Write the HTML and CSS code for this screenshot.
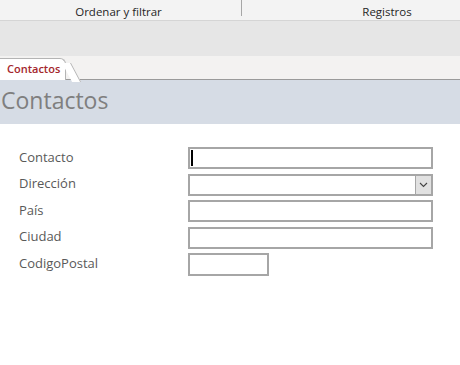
FILE: index.html
```html
<!DOCTYPE html>
<html lang="es">
<head>
  <meta charset="UTF-8" />
  <title>Contactos</title>
  <link rel="stylesheet" href="styles.css">
</head>
<body>
  <!-- Ribbon group captions -->
  <div class="ribbon">
    <div class="group group-sort">Ordenar y filtrar</div>
    <div class="group group-records">Registros</div>
  </div>
  <div class="ribbon-blank"></div>

  <!-- Document tabs -->
  <div class="tabs">
    <div class="tab">Contactos</div>
  </div>

  <div class="form-header">Contactos</div>

  <div class="form-body">
    <div class="row">
      <label class="label">Contacto</label>
      <div class="field field-wide"><span class="caret"></span></div>
    </div>
    <div class="row">
      <label class="label">Dirección</label>
      <div class="field field-wide combo">
        <span class="combo-btn">
          <svg width="9" height="6" viewBox="0 0 9 6"><path d="M1 1 L4.5 4.5 L8 1" fill="none" stroke="#444" stroke-width="1.1"/></svg>
        </span>
      </div>
    </div>
    <div class="row">
      <label class="label">País</label>
      <div class="field field-wide"></div>
    </div>
    <div class="row">
      <label class="label">Ciudad</label>
      <div class="field field-wide"></div>
    </div>
    <div class="row">
      <label class="label">CodigoPostal</label>
      <div class="field field-short"></div>
    </div>
  </div>
</body>
</html>
```

FILE: styles.css
```css
* {
  margin: 0;
  padding: 0;
  box-sizing: border-box;
}

body {
  font-family: "Open Sans", "Noto Sans", sans-serif;
  background: #fff;
  width: 460px;
  height: 365px;
  overflow: hidden;
}

/* Ribbon captions */
.ribbon {
  display: flex;
  height: 21px;
  background: #f3f3f3;
  border-bottom: 1px solid #d5d5d5;
  font-size: 11.5px;
  color: #262626;
}

.group {
  text-align: center;
}

.group-sort {
  width: 242px;
  border-right: 1px solid #a6a6a6;
  height: 16px;
  line-height: 24px;
  padding-right: 4px;
}

.group-records {
  flex: 1;
  line-height: 24px;
  padding-left: 72px;
}

.ribbon-blank {
  height: 35px;
  background: #e6e6e6;
}

/* Tabs */
.tabs {
  height: 24px;
  background: #f3f2f1;
  border-bottom: 1px solid #9a9a9a;
  position: relative;
}

.tab {
  position: absolute;
  left: 0;
  top: 2px;
  height: 22px;
  width: 66px;
  background: #fff;
  border: 1px solid #b4b4b4;
  border-left: none;
  border-bottom: none;
  border-top-right-radius: 6px;
  color: #a4262c;
  font-size: 11px;
  font-weight: 600;
  padding-left: 7px;
  line-height: 20px;
}

.tab::after {
  content: "";
  position: absolute;
  right: -6px;
  top: 4px;
  width: 8px;
  height: 19px;
  background: #fff;
  border-right: 1px solid #b4b4b4;
  transform: skewX(28deg);
  transform-origin: top left;
}

/* Form header */
.form-header {
  height: 44px;
  background: #d6dce5;
  color: #7f7f7f;
  font-size: 23px;
  padding-left: 1px;
  line-height: 41px;
}

/* Form body */
.form-body {
  padding: 23px 0 0 19px;
}

.row {
  display: flex;
  align-items: center;
  height: 22px;
  margin-bottom: 4.5px;
}

.label {
  width: 169px;
  font-size: 13px;
  color: #595959;
  margin-top: -3px;
}

.field {
  height: 22px;
  border: 2px solid #a6a6a6;
  background: #fff;
  position: relative;
}

.field-wide {
  width: 245px;
}

.field-short {
  width: 81px;
  height: 23px;
}

.caret {
  position: absolute;
  left: 1px;
  top: 1px;
  width: 2px;
  height: 16px;
  background: #000;
}

.combo-btn {
  position: absolute;
  right: 0;
  top: 0;
  width: 16px;
  height: 18px;
  background: #e1e1e1;
  border-left: 1px solid #a6a6a6;
  display: flex;
  align-items: center;
  justify-content: center;
}
```
